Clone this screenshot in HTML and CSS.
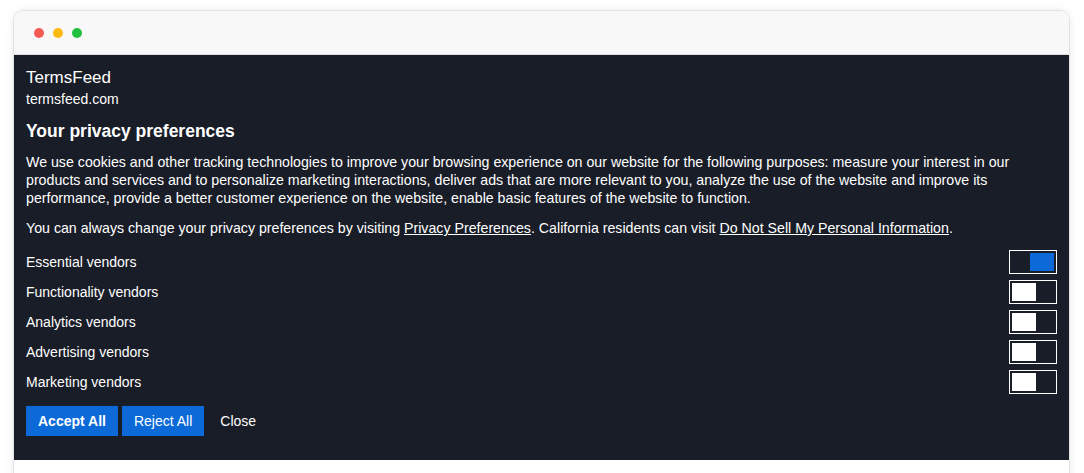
FILE: index.html
```html
<!DOCTYPE html>
<html lang="en">
<head>
    <meta charset="UTF-8">
    <meta name="viewport" content="width=device-width, initial-scale=1.0">
    <title>Cookie consent</title>
    <link rel="stylesheet" href="styles.css">
</head>
<body>
    <div class="window">
        <div class="titlebar">
            <span class="dot red"></span>
            <span class="dot yellow"></span>
            <span class="dot green"></span>
        </div>
        <div class="consent">
            <div class="site_name">TermsFeed</div>
            <div class="site_url">termsfeed.com</div>
            <h2 class="title">Your privacy preferences</h2>
            <p class="text">We use cookies and other tracking technologies to improve your browsing experience on our website for the following purposes: measure your interest in our products and services and to personalize marketing interactions, deliver ads that are more relevant to you, analyze the use of the website and improve its performance, provide a better customer experience on the website, enable basic features of the website to function.</p>
            <p class="text">You can always change your privacy preferences by visiting <a href="javascript:;">Privacy Preferences</a>. California residents can visit <a href="javascript:;">Do Not Sell My Personal Information</a>.</p>

            <div class="vendors">
                <div class="vendor">
                    <span>Essential vendors</span>
                    <span class="toggle on"><span class="knob"></span></span>
                </div>
                <div class="vendor">
                    <span>Functionality vendors</span>
                    <span class="toggle"><span class="knob"></span></span>
                </div>
                <div class="vendor">
                    <span>Analytics vendors</span>
                    <span class="toggle"><span class="knob"></span></span>
                </div>
                <div class="vendor">
                    <span>Advertising vendors</span>
                    <span class="toggle"><span class="knob"></span></span>
                </div>
                <div class="vendor">
                    <span>Marketing vendors</span>
                    <span class="toggle"><span class="knob"></span></span>
                </div>
            </div>

            <div class="actions">
                <button class="btn primary">Accept All</button>
                <button class="btn secondary">Reject All</button>
                <button class="btn link">Close</button>
            </div>
        </div>
    </div>
</body>
</html>
```

FILE: styles.css
```css
*{
    margin: 0;
    padding: 0;
    box-sizing: border-box;
}

body{
    background-color: #fff;
    font-family: "Liberation Sans", Arial, sans-serif;
    overflow: hidden;
}

.window{
    margin: 10px 14px 0 13px;
    height: 520px;
    border: 1px solid #e2e2e2;
    border-radius: 10px;
    overflow: hidden;
    box-shadow: 0 0 8px rgba(0, 0, 0, 0.08);
}

.titlebar{
    height: 44px;
    display: flex;
    align-items: center;
    gap: 9px;
    padding-left: 20px;
    background-color: #f8f8f8;
    border-bottom: 1px solid #dedede;
}

.titlebar .dot{
    width: 10px;
    height: 10px;
    border-radius: 50%;
}
.dot.red{ background-color: #f45b52; }
.dot.yellow{ background-color: #fbba10; }
.dot.green{ background-color: #23c040; }

.consent{
    background-color: #191d27;
    color: #fff;
    padding: 12px 12px 24px 12px;
}

.site_name{
    font-size: 17px;
    line-height: 22px;
}

.site_url{
    font-size: 14px;
    line-height: 20px;
}

.consent .title{
    font-size: 17.5px;
    font-weight: bold;
    line-height: 22px;
    margin: 11px 0 11px;
}

.consent .text{
    font-size: 14.2px;
    line-height: 18px;
    margin-bottom: 12px;
}

.consent .text a{
    color: #fff;
    text-decoration: underline;
}

.vendors{
    display: flex;
    flex-direction: column;
    gap: 6px;
    padding-top: 1px;
}

.vendor{
    display: flex;
    justify-content: space-between;
    align-items: center;
    font-size: 14px;
    height: 24px;
}

.toggle{
    width: 48px;
    height: 24px;
    border: 1px solid #fff;
    padding: 2px;
    display: flex;
}

.toggle .knob{
    width: 24px;
    height: 18px;
    background-color: #fff;
}

.toggle.on{
    justify-content: flex-end;
}

.toggle.on .knob{
    background-color: #0b69d8;
}

.actions{
    display: flex;
    gap: 4px;
    margin-top: 12px;
}

.btn{
    height: 30px;
    padding: 0 12px;
    border: none;
    font-family: inherit;
    font-size: 14px;
    color: #fff;
    background-color: #0b69d8;
    cursor: pointer;
}

.btn.primary{
    font-weight: bold;
}

.btn.link{
    background-color: transparent;
}
```
